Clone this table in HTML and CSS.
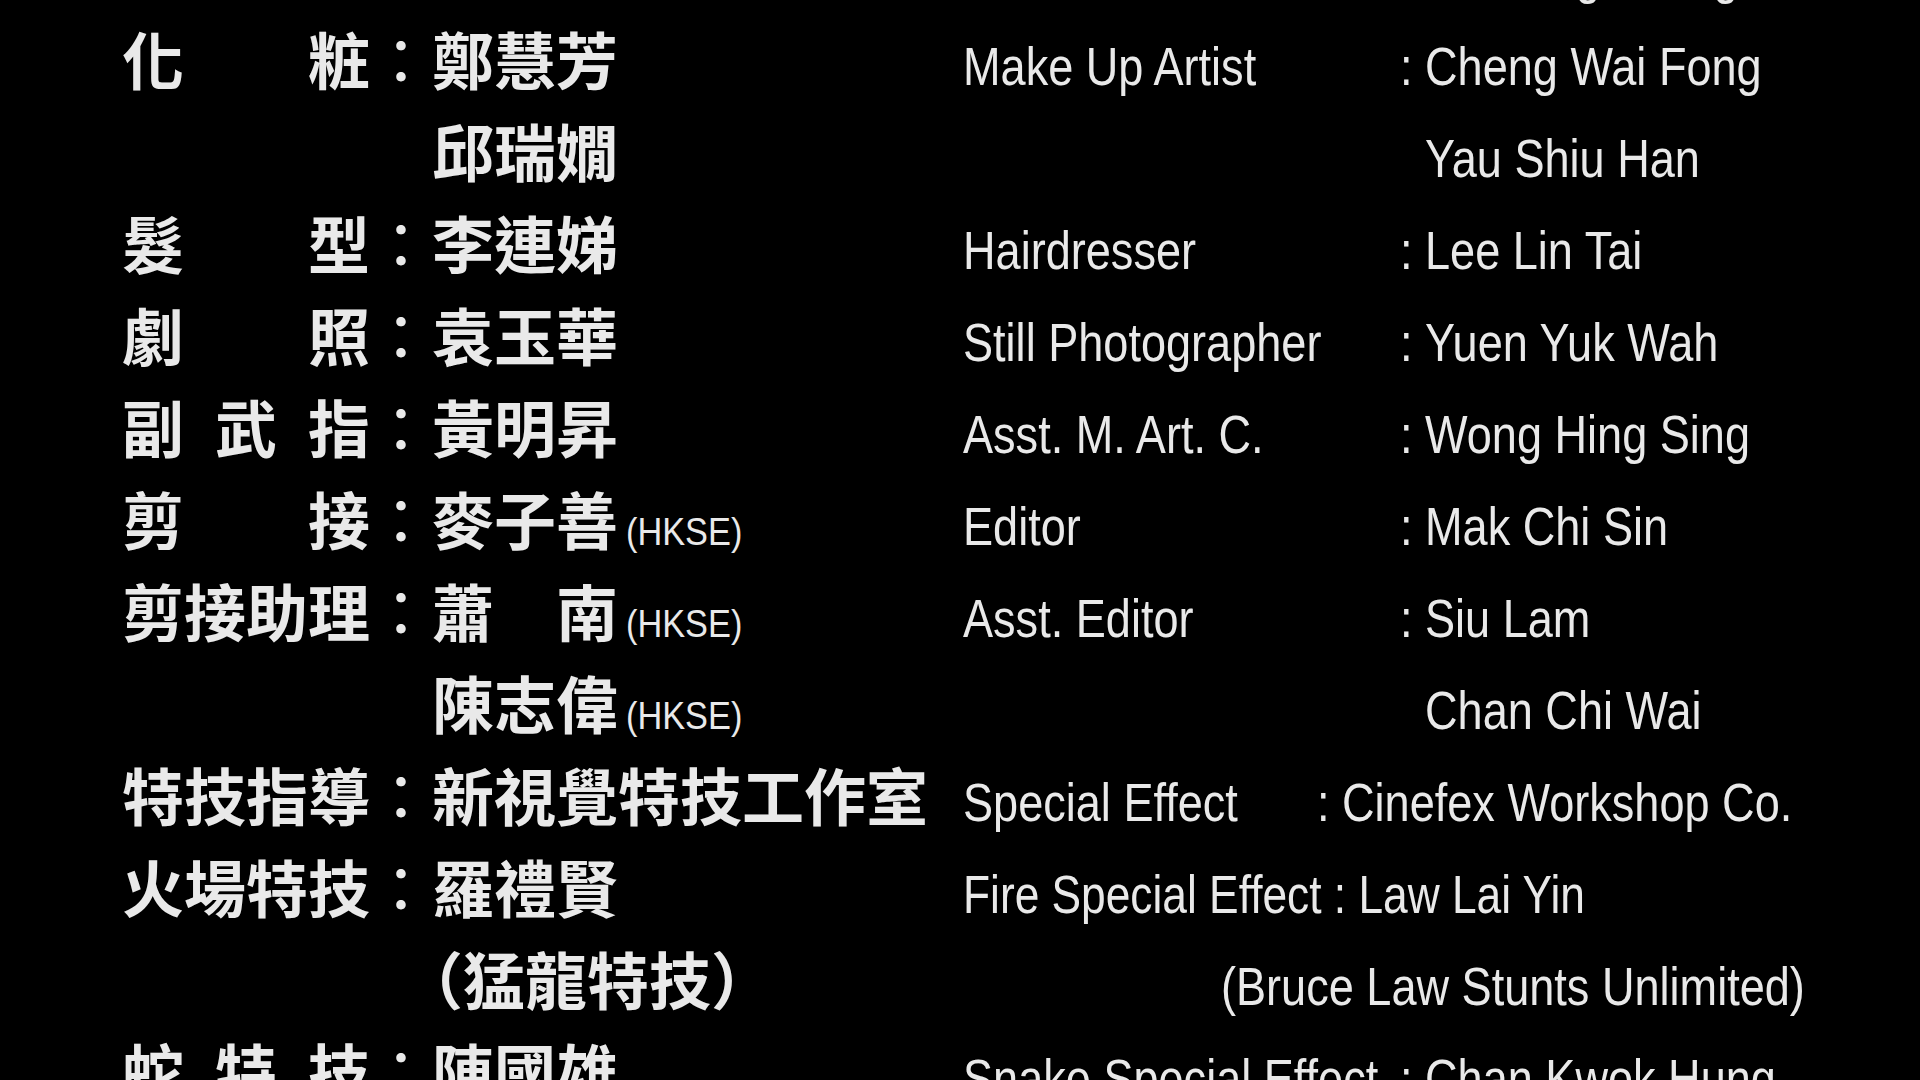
FILE: index.html
```html
<!DOCTYPE html>
<html lang="zh-Hant">
<head>
    <meta charset="UTF-8">
    <meta name="viewport" content="width=device-width, initial-scale=1.0">
    <title>Credits</title>
    <link rel="stylesheet" href="styles.css">
</head>
<body>
    <div class="credits">
        <div class="row">
            <div class="zh"><span class="zh-role">服裝</span><span class="zh-sep">：</span><span class="zh-name">李英樑</span></div>
            <div class="en"><span class="en-role">Wardrobe</span><span class="en-sep">:</span><span class="en-name">Lee Ying Leung</span></div>
        </div>

        <div class="row">
            <div class="zh"><span class="zh-role">化粧</span><span class="zh-sep">：</span><span class="zh-name">鄭慧芳</span></div>
            <div class="en"><span class="en-role">Make Up Artist</span><span class="en-sep">:</span><span class="en-name">Cheng Wai Fong</span></div>
        </div>
        <div class="row">
            <div class="zh"><span class="zh-role"></span><span class="zh-sep"></span><span class="zh-name">邱瑞嫺</span></div>
            <div class="en"><span class="en-role"></span><span class="en-sep"></span><span class="en-name">Yau Shiu Han</span></div>
        </div>
        <div class="row">
            <div class="zh"><span class="zh-role">髮型</span><span class="zh-sep">：</span><span class="zh-name">李連娣</span></div>
            <div class="en"><span class="en-role">Hairdresser</span><span class="en-sep">:</span><span class="en-name">Lee Lin Tai</span></div>
        </div>
        <div class="row">
            <div class="zh"><span class="zh-role">劇照</span><span class="zh-sep">：</span><span class="zh-name">袁玉華</span></div>
            <div class="en"><span class="en-role">Still Photographer</span><span class="en-sep">:</span><span class="en-name">Yuen Yuk Wah</span></div>
        </div>
        <div class="row">
            <div class="zh"><span class="zh-role">副武指</span><span class="zh-sep">：</span><span class="zh-name">黃明昇</span></div>
            <div class="en"><span class="en-role">Asst. M. Art. C.</span><span class="en-sep">:</span><span class="en-name">Wong Hing Sing</span></div>
        </div>
        <div class="row">
            <div class="zh"><span class="zh-role">剪接</span><span class="zh-sep">：</span><span class="zh-name">麥子善<span class="tag">(HKSE)</span></span></div>
            <div class="en"><span class="en-role">Editor</span><span class="en-sep">:</span><span class="en-name">Mak Chi Sin</span></div>
        </div>
        <div class="row">
            <div class="zh"><span class="zh-role">剪接助理</span><span class="zh-sep">：</span><span class="zh-name">蕭　南<span class="tag">(HKSE)</span></span></div>
            <div class="en"><span class="en-role">Asst. Editor</span><span class="en-sep">:</span><span class="en-name">Siu Lam</span></div>
        </div>
        <div class="row">
            <div class="zh"><span class="zh-role"></span><span class="zh-sep"></span><span class="zh-name">陳志偉<span class="tag">(HKSE)</span></span></div>
            <div class="en"><span class="en-role"></span><span class="en-sep"></span><span class="en-name">Chan Chi Wai</span></div>
        </div>
        <div class="row">
            <div class="zh"><span class="zh-role">特技指導</span><span class="zh-sep">：</span><span class="zh-name">新視覺特技工作室</span></div>
            <div class="en"><span class="en-role short">Special Effect</span><span class="en-sep">:</span><span class="en-name">Cinefex Workshop Co.</span></div>
        </div>
        <div class="row">
            <div class="zh"><span class="zh-role">火場特技</span><span class="zh-sep">：</span><span class="zh-name">羅禮賢</span></div>
            <div class="en"><span class="en-line tight">Fire Special Effect : Law Lai Yin</span></div>
        </div>
        <div class="row">
            <div class="zh"><span class="zh-role"></span><span class="zh-sep"></span><span class="zh-name half">（猛龍特技）</span></div>
            <div class="en"><span class="en-line indent">(Bruce Law Stunts Unlimited)</span></div>
        </div>
        <div class="row">
            <div class="zh"><span class="zh-role">蛇特技</span><span class="zh-sep">：</span><span class="zh-name">陳國雄</span></div>
            <div class="en"><span class="en-role">Snake Special Effect</span><span class="en-sep">:</span><span class="en-name">Chan Kwok Hung</span></div>
        </div>
    </div>
</body>
</html>
```

FILE: styles.css
```css
body {
    margin: 0;
    background-color: #000;
    color: #e9e9e9;
    height: 100vh;
    overflow: hidden;
}

.credits {
    margin-top: -80px;
    padding-left: 122px;
}

.row {
    display: flex;
    align-items: baseline;
    height: 92px;
}

.zh {
    display: flex;
    align-items: baseline;
    width: 841px;
    font-family: "Noto Sans CJK TC", sans-serif;
    font-size: 62px;
    font-weight: 700;
    line-height: 92px;
}

.zh-role {
    width: 4em;
    text-align: justify;
    text-align-last: justify;
}

.zh-sep {
    width: 1em;
    font-weight: 400;
}

.zh-name {
    white-space: nowrap;
}

.zh-name.half {
    font-feature-settings: "halt";
}

/* no narrow face installed, so squeeze Liberation Sans to Helvetica Narrow width */
.tag {
    display: inline-block;
    margin-left: 8px;
    font-family: "Liberation Sans", Arial, sans-serif;
    font-size: 39px;
    font-weight: 400;
    line-height: 1;
    transform: scaleX(0.88);
    transform-origin: left;
}

.en {
    display: flex;
    align-items: baseline;
    font-family: "Liberation Sans", Arial, sans-serif;
    font-size: 54px;
    white-space: nowrap;
}

.en span {
    transform: scaleX(0.835);
    transform-origin: left;
}

.en span.tight {
    transform: scaleX(0.82);
}

.en-role {
    width: 437px;
}

.en-role.short {
    width: 354px;
}

.en-sep {
    width: 25px;
}

.en-line.indent {
    margin-left: 259px;
}
```
